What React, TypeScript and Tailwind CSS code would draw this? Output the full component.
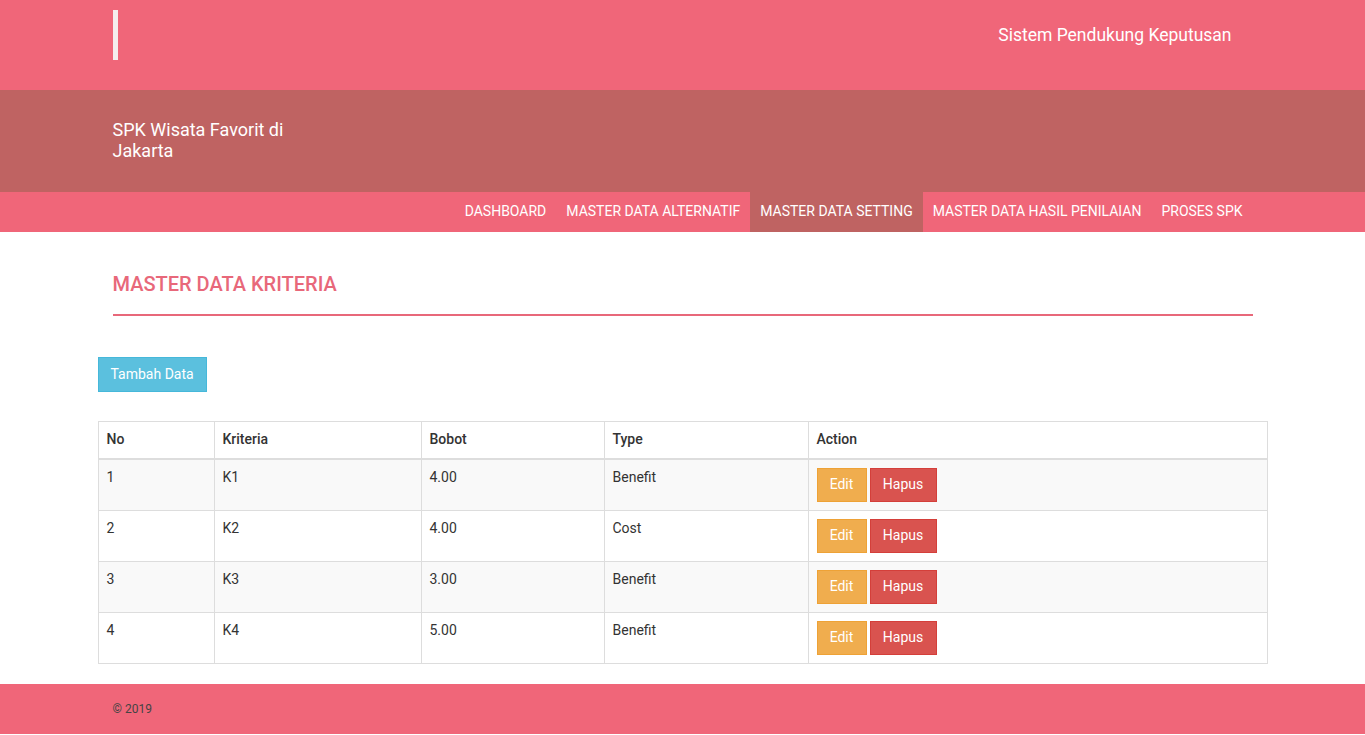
import React from "react";

const rows = [
  { no: "1", k: "K1", b: "4.00", t: "Benefit" },
  { no: "2", k: "K2", b: "4.00", t: "Cost" },
  { no: "3", k: "K3", b: "3.00", t: "Benefit" },
  { no: "4", k: "K4", b: "5.00", t: "Benefit" },
];

const nav = [
  "DASHBOARD",
  "MASTER DATA ALTERNATIF",
  "MASTER DATA SETTING",
  "MASTER DATA HASIL PENILAIAN",
  "PROSES SPK",
];

export default function App() {
  return (
    <div className="min-h-[735px] bg-white text-[#333] text-[14px] leading-[20px]" style={{ fontFamily: "Roboto, 'Liberation Sans', sans-serif" }}>
      {/* top bar */}
      <div className="bg-[#f06679] h-[90px]">
        <div className="w-[1170px] mx-auto px-[15px] flex justify-between">
          <div className="pt-[10px]">
            <div className="w-[5px] h-[50px] bg-[#f5eded]" />
          </div>
          <div className="pt-[23px] pr-[21px] text-white text-[17.5px] leading-[24px]">Sistem Pendukung Keputusan</div>
        </div>
      </div>
      {/* band */}
      <div className="bg-[#bf6362] h-[102px]">
        <div className="w-[1170px] mx-auto px-[15px] pt-[29px]">
          <div className="w-[190px] text-white text-[18px] leading-[21px]">SPK Wisata Favorit di Jakarta</div>
        </div>
      </div>
      {/* nav */}
      <div className="bg-[#f06679] h-[40px]">
        <div className="w-[1170px] mx-auto px-[15px] flex justify-end h-full">
          {nav.map((n) => (
            <div
              key={n}
              className={`px-[10px] h-full flex items-center pb-[2px] text-white text-[14px] ${n === "MASTER DATA SETTING" ? "bg-[#bf6362]" : ""}`}
            >
              {n}
            </div>
          ))}
        </div>
      </div>
      {/* content */}
      <div className="w-[1170px] mx-auto">
        <div className="px-[15px] pt-[40px]">
          <h1 className="text-[#e8687a] text-[20px] leading-[24px] font-medium pb-[18px] border-b-2 border-[#e8687a]">MASTER DATA KRITERIA</h1>
        </div>
        <div className="pt-[41px]">
          <button className="h-[35px] px-[12px] pb-[2px] bg-[#5bc0de] border border-[#46b8da] text-white text-[14px]">Tambah Data</button>
        </div>
        <table className="mt-[29px] w-full border-collapse border border-[#ddd] mb-[20px]">
          <thead>
            <tr>
              <th className="w-[116px] text-left font-medium px-[8px] pt-[7px] pb-[9px] border border-[#ddd] border-b-2">No</th>
              <th className="w-[207px] text-left font-medium px-[8px] pt-[7px] pb-[9px] border border-[#ddd] border-b-2">Kriteria</th>
              <th className="w-[183px] text-left font-medium px-[8px] pt-[7px] pb-[9px] border border-[#ddd] border-b-2">Bobot</th>
              <th className="w-[204px] text-left font-medium px-[8px] pt-[7px] pb-[9px] border border-[#ddd] border-b-2">Type</th>
              <th className="text-left font-medium px-[8px] pt-[7px] pb-[9px] border border-[#ddd] border-b-2">Action</th>
            </tr>
          </thead>
          <tbody>
            {rows.map((r, i) => (
              <tr key={r.no} className={i % 2 === 0 ? "bg-[#f9f9f9]" : "bg-white"}>
                <td className="align-top px-[8px] pt-[7px] pb-[9px] border border-[#ddd]">{r.no}</td>
                <td className="align-top px-[8px] pt-[7px] pb-[9px] border border-[#ddd]">{r.k}</td>
                <td className="align-top px-[8px] pt-[7px] pb-[9px] border border-[#ddd]">{r.b}</td>
                <td className="align-top px-[8px] pt-[7px] pb-[9px] border border-[#ddd]">{r.t}</td>
                <td className="align-top px-[8px] py-[8px] border border-[#ddd]">
                  <div className="flex gap-[3px]">
                    <button className="h-[34px] w-[50px] pb-[2px] bg-[#f0ad4e] border border-[#eea236] text-white text-[14px]">Edit</button>
                    <button className="h-[34px] w-[67px] pb-[2px] bg-[#d9534f] border border-[#d43f3a] text-white text-[14px]">Hapus</button>
                  </div>
                </td>
              </tr>
            ))}
          </tbody>
        </table>
      </div>
      {/* footer */}
      <div className="bg-[#f06679] h-[50px]">
        <div className="w-[1170px] mx-auto px-[15px] h-full flex items-center text-[12px] text-[#444]">© 2019</div>
      </div>
    </div>
  );
}
